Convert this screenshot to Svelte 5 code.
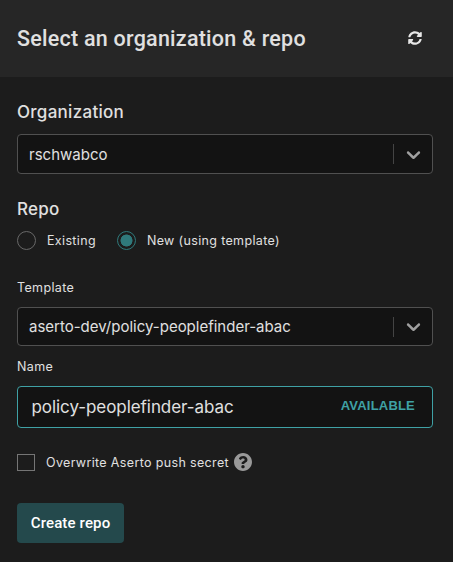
<script>
  let mode = $state('new');
  let name = $state('policy-peoplefinder-abac');
  let overwrite = $state(false);
</script>

{#snippet select(value, compact = false)}
  <div class="select" class:compact>
    <span class="value">{value}</span>
    <span class="separator"></span>
    <svg class="chevron" viewBox="0 0 20 20" aria-hidden="true">
      <path d="M4.516 7.548c0.436-0.446 1.043-0.481 1.576 0l3.908 3.747 3.908-3.747c0.533-0.481 1.141-0.446 1.574 0 0.436 0.445 0.408 1.197 0 1.615-0.406 0.418-4.695 4.502-4.695 4.502-0.217 0.223-0.502 0.335-0.787 0.335s-0.57-0.112-0.789-0.335c0 0-4.287-4.084-4.695-4.502s-0.436-1.17 0-1.615z" />
    </svg>
  </div>
{/snippet}

<div class="panel">
  <header>
    <h1>Select an organization &amp; repo</h1>
    <svg class="refresh" viewBox="0 0 512 512" role="img" aria-label="Refresh">
      <path d="M370.72 133.28C339.458 104.008 298.888 87.962 255.848 88c-77.458.068-144.328 53.178-162.791 126.85-1.344 5.363-6.122 9.15-11.651 9.15H24.103c-7.498 0-13.194-6.807-11.807-14.176C33.933 94.924 134.813 8 256 8c66.448 0 126.791 26.136 171.315 68.685L463.03 40.97C478.149 25.851 504 36.559 504 57.941V192c0 13.255-10.745 24-24 24H345.941c-21.382 0-32.09-25.851-16.971-40.971l41.75-41.749zM32 296h134.059c21.382 0 32.09 25.851 16.971 40.971l-41.75 41.75c31.262 29.273 71.835 45.319 114.876 45.28 77.418-.07 144.315-53.144 162.787-126.849 1.344-5.363 6.122-9.15 11.651-9.15h57.304c7.498 0 13.194 6.807 11.807 14.176C478.067 417.076 377.187 504 256 504c-66.448 0-126.791-26.136-171.315-68.685L48.97 471.03C33.851 486.149 8 475.441 8 454.059V320c0-13.255 10.745-24 24-24z" />
    </svg>
  </header>

  <main>
    <h2>Organization</h2>
    {@render select('rschwabco')}

    <h2 class="repo">Repo</h2>
    <div class="radios">
      <label><input type="radio" value="existing" bind:group={mode} /><span>Existing</span></label>
      <label><input type="radio" value="new" bind:group={mode} /><span>New (using template)</span></label>
    </div>

    <div class="caption template">Template</div>
    {@render select('aserto-dev/policy-peoplefinder-abac', true)}

    <div class="caption name">Name</div>
    <div class="field">
      <input type="text" aria-label="Name" spellcheck="false" bind:value={name} />
      <span class="status">AVAILABLE</span>
    </div>

    <div class="overwrite">
      <label><input type="checkbox" bind:checked={overwrite} /><span>Overwrite Aserto push secret</span></label>
      <svg class="help" viewBox="8 8 496 496" role="img" aria-label="Help">
        <path d="M504 256c0 136.997-111.043 248-248 248S8 392.997 8 256C8 119.083 119.043 8 256 8s248 111.083 248 248zM262.655 90c-54.497 0-89.255 22.957-116.549 63.758-3.536 5.286-2.353 12.415 2.715 16.258l34.699 26.31c5.205 3.947 12.621 3.008 16.665-2.122 17.864-22.658 30.113-35.797 57.303-35.797 20.429 0 45.698 13.148 45.698 32.958 0 14.976-12.363 22.667-32.534 33.976C247.128 238.528 216 254.941 216 296v4c0 6.627 5.373 12 12 12h56c6.627 0 12-5.373 12-12v-1.333c0-28.462 83.186-29.647 83.186-106.667 0-58.002-60.165-102-116.531-102zM256 338c-25.365 0-46 20.635-46 46 0 25.364 20.635 46 46 46s46-20.636 46-46c0-25.365-20.635-46-46-46z" />
      </svg>
    </div>

    <button type="button">Create repo</button>
  </main>
</div>

<style>
  :global(body) {
    background: #1c1c1c;
  }
  .panel {
    box-sizing: border-box;
    height: 562px;
    background: #1c1c1c;
    color: #e0e0e0;
    font-family: Inter, 'Liberation Sans', sans-serif;
    overflow: hidden;
    white-space: nowrap;
  }
  header {
    box-sizing: border-box;
    height: 77px;
    padding: 0 31px 0 17px;
    display: flex;
    align-items: center;
    justify-content: space-between;
    background: #262626;
  }
  h1 {
    margin: 0;
    font: 500 21.5px/26px Roboto, sans-serif;
    letter-spacing: 0.24px;
  }
  .refresh {
    width: 14px;
    height: 14px;
    margin-bottom: 2px;
    fill: #e6e6e6;
  }
  main {
    padding: 23px 20px 0 17px;
  }
  h2 {
    margin: 0 0 10px;
    font-size: 17px;
    line-height: 24px;
    font-weight: 500;
    letter-spacing: 0.28px;
  }
  h2.repo {
    margin: 23px 0 10px;
  }
  .select {
    box-sizing: border-box;
    height: 40px;
    display: flex;
    align-items: center;
    padding: 0 7px 0 11px;
    border: 1px solid #505050;
    border-radius: 4px;
    background: #131313;
  }
  .select.compact {
    height: 39px;
  }
  .value {
    flex: 1;
    font-size: 15px;
  }
  .separator {
    width: 1px;
    height: 20px;
    background: #444;
  }
  .chevron {
    width: 23px;
    height: 23px;
    margin-left: 8px;
    fill: #a0a0a0;
  }
  .radios {
    display: flex;
    gap: 21px;
    height: 19px;
  }
  label {
    display: flex;
    align-items: center;
    font-size: 12.5px;
    letter-spacing: 0.35px;
  }
  input[type='radio'] {
    appearance: none;
    box-sizing: border-box;
    width: 19px;
    height: 19px;
    margin: 0 11px 0 0;
    border: 1px solid #686868;
    border-radius: 50%;
  }
  input[type='radio']:checked {
    border-color: #2f797b;
    background: radial-gradient(circle, #2f797b 5.7px, transparent 6.3px);
  }
  .caption {
    font-size: 12.5px;
    line-height: 18px;
    letter-spacing: 0.35px;
  }
  .template {
    margin: 29px 0 10px;
  }
  .name {
    margin: 12px 0 10px;
  }
  .field {
    box-sizing: border-box;
    height: 42px;
    display: flex;
    align-items: center;
    padding: 0 17px 0 13.5px;
    border: 1px solid #3fa1a5;
    border-radius: 4px;
    background: #131313;
  }
  .field input {
    flex: 1;
    min-width: 0;
    padding: 0;
    border: 0;
    outline: 0;
    background: none;
    color: #e0e0e0;
    font: 400 17px/24px Inter, 'Liberation Sans', sans-serif;
    letter-spacing: -0.06px;
  }
  .status {
    padding-bottom: 2px;
    color: #3fa1a5;
    font: 700 13px/18px 'Liberation Sans', sans-serif;
    letter-spacing: 0.2px;
  }
  .overwrite {
    display: flex;
    align-items: center;
    height: 18px;
    margin-top: 25px;
  }
  input[type='checkbox'] {
    appearance: none;
    box-sizing: border-box;
    width: 18px;
    height: 17px;
    margin: 0 11px 0 0;
    border: 1px solid #757575;
  }
  input[type='checkbox']:checked {
    background: #2f797b;
  }
  .help {
    width: 18px;
    height: 18px;
    margin-left: 5px;
    fill: #999;
  }
  button {
    display: block;
    width: 107px;
    height: 40px;
    margin-top: 32px;
    padding: 0;
    border: 0;
    border-radius: 4px;
    background: #24494c;
    color: #fff;
    font: 500 15px/20px Roboto, sans-serif;
    letter-spacing: 0.15px;
  }
</style>
